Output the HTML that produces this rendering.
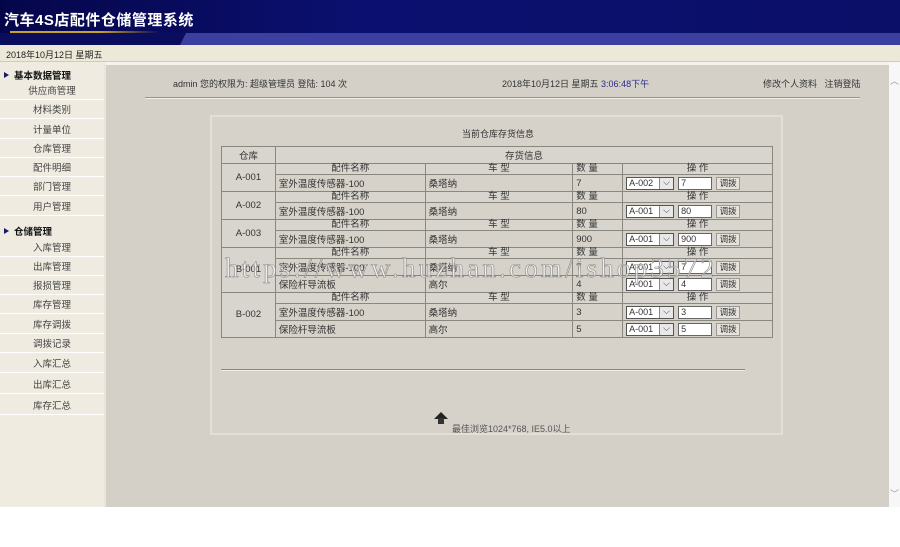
<!DOCTYPE html>
<html><head><meta charset="utf-8"><style>
*{margin:0;padding:0;box-sizing:border-box}
body{width:900px;height:547px;background:#fff;position:relative;overflow:hidden;font-family:"Liberation Sans","Noto Sans CJK SC",sans-serif;font-size:10px;color:#333}
.a{position:absolute;white-space:nowrap}
#hdr{left:0;top:0;width:900px;height:33px;background:linear-gradient(90deg,#05064a 0%,#0b1070 40%,#0b0f68 100%)}
#band{left:0;top:33px;width:900px;height:12px;background:#0a0d5e}
#band2{left:180px;top:33px;width:720px;height:12px;background:#3a3fa0;clip-path:polygon(6px 0,100% 0,100% 100%,0 100%)}
#title{left:4px;top:9px;color:#fff;font-size:15px;font-weight:bold;letter-spacing:.5px}
#gold{left:10px;top:31px;width:150px;height:2px;background:linear-gradient(90deg,#c9a227,#c9a227 60%,rgba(201,162,39,0))}
#datebar{left:0;top:45px;width:900px;height:17px;background:#ece9d8;border-bottom:1px solid #cfcbbd}
#side{left:0;top:62px;width:104px;height:445px;background:#efebe0}
.si{position:absolute;left:0;width:104px;height:19px;border-bottom:1px solid #fff;text-align:center;line-height:21px;font-size:9.5px;color:#444}
.sh{position:absolute;left:0;width:104px;text-align:left;padding-left:14px;font-weight:bold;font-size:9.5px;color:#111}
.sh:before{content:"";position:absolute;left:4px;top:4px;border-left:5px solid #1a1a6a;border-top:3.5px solid transparent;border-bottom:3.5px solid transparent}
#main{left:104px;top:62px;width:785px;height:445px;background:#d4d0c8;border-top:3px solid #f4f2ec;border-left:2px solid #e8e5dc}
#scroll{left:889px;top:62px;width:11px;height:445px;background:#f7f7f7}
#panel{left:210px;top:115px;width:573px;height:320px;background:#d6d2ca;border:2px solid #e2dfd8}
table{position:absolute;left:221px;top:146px;width:552px;border-collapse:collapse;font-size:9.5px}
td{border:1px solid #8a877f;padding:0 3px;color:#333;white-space:nowrap}
td.l{background:#d6d2ca;text-align:center}
tr.h td{height:11px;line-height:10px;text-align:center;background:#d8d5ce}
tr.d td{height:17px;background:#d6d2ca}
.sel{display:inline-block;width:48px;height:13px;border:1px solid #555;background:#fff;font-size:9px;line-height:11px;padding-left:2px;position:relative;vertical-align:middle}
.sel:after{content:"⌵";position:absolute;right:0;top:0;width:13px;height:11px;background:#e8e8e8;border-left:1px solid #888;text-align:center;font-size:9px;line-height:8px}
.inp{display:inline-block;width:34px;height:13px;border:1px solid #666;background:#fff;font-size:9px;line-height:11px;padding-left:2px;margin-left:4px;vertical-align:middle}
.btn{display:inline-block;width:24px;height:13px;border:1px solid #999;background:#e6e3dc;font-size:8.5px;line-height:11px;text-align:center;margin-left:4px;vertical-align:middle}
#wm{left:225px;top:253px;font-family:"Liberation Serif",serif;font-size:27px;color:rgba(255,255,255,.6);-webkit-text-stroke:0.6px #888;letter-spacing:3.2px}
</style></head><body>
<div class="a" id="hdr"></div>
<div class="a" id="band"></div>
<div class="a" id="band2"></div>
<div class="a" id="title">汽车4S店配件仓储管理系统</div>
<div class="a" id="gold"></div>
<div class="a" id="datebar"><span style="position:absolute;left:6px;top:3px;font-size:9px;color:#222">2018年10月12日 星期五</span></div>
<div class="a" id="side">
<div class="sh" style="top:6px">基本数据管理</div>
<div class="si" style="top:19px">供应商管理</div>
<div class="si" style="top:38px">材料类别</div>
<div class="si" style="top:58px">计量单位</div>
<div class="si" style="top:77px">仓库管理</div>
<div class="si" style="top:96px">配件明细</div>
<div class="si" style="top:115px">部门管理</div>
<div class="si" style="top:135px">用户管理</div>
<div class="sh" style="top:162px">仓储管理</div>
<div class="si" style="top:176px">入库管理</div>
<div class="si" style="top:195px">出库管理</div>
<div class="si" style="top:214px">报损管理</div>
<div class="si" style="top:233px">库存管理</div>
<div class="si" style="top:253px">库存调拨</div>
<div class="si" style="top:272px">调拨记录</div>
<div class="si" style="top:292px">入库汇总</div>
<div class="si" style="top:313px">出库汇总</div>
<div class="si" style="top:334px">库存汇总</div>
</div>
<div class="a" id="main"></div>
<div class="a" id="scroll"><span style="position:absolute;left:1px;top:12px;color:#999;font-size:9px">︿</span><span style="position:absolute;left:1px;top:425px;color:#999;font-size:9px">﹀</span></div>
<div class="a" style="left:173px;top:77px;font-size:9px">admin 您的权限为: 超级管理员 登陆: 104 次</div>
<div class="a" style="left:502px;top:77px;font-size:9px">2018年10月12日 星期五 <span style="color:#2a2a8a">3:06:48下午</span></div>
<div class="a" style="left:763px;top:77px;font-size:9px">修改个人资料 &nbsp; 注销登陆</div>
<div class="a" style="left:145px;top:97px;width:715px;height:2px;border-top:1px solid #99958c;border-bottom:1px solid #f0eee8"></div>
<div class="a" id="panel"></div>
<div class="a" style="left:462px;top:127px;font-size:9px">当前仓库存货信息</div>
<table>
<colgroup><col style="width:54px"><col style="width:150px"><col style="width:148px"><col style="width:50px"><col style="width:150px"></colgroup>
<tr><td class="l" style="height:17px;background:#d8d5ce">仓库</td><td colspan="4" style="text-align:center;background:#d8d5ce">存货信息</td></tr>
<tr class="h"><td class="l" rowspan="2">A-001</td><td>配件名称</td><td>车 型</td><td style="text-align:left">数 量</td><td>操 作</td></tr>
<tr class="d"><td>室外温度传感器-100</td><td>桑塔纳</td><td>7</td><td><span class="sel">A-002</span><span class="inp">7</span><span class="btn">调拨</span></td></tr>
<tr class="h"><td class="l" rowspan="2">A-002</td><td>配件名称</td><td>车 型</td><td style="text-align:left">数 量</td><td>操 作</td></tr>
<tr class="d"><td>室外温度传感器-100</td><td>桑塔纳</td><td>80</td><td><span class="sel">A-001</span><span class="inp">80</span><span class="btn">调拨</span></td></tr>
<tr class="h"><td class="l" rowspan="2">A-003</td><td>配件名称</td><td>车 型</td><td style="text-align:left">数 量</td><td>操 作</td></tr>
<tr class="d"><td>室外温度传感器-100</td><td>桑塔纳</td><td>900</td><td><span class="sel">A-001</span><span class="inp">900</span><span class="btn">调拨</span></td></tr>
<tr class="h"><td class="l" rowspan="3">B-001</td><td>配件名称</td><td>车 型</td><td style="text-align:left">数 量</td><td>操 作</td></tr>
<tr class="d"><td>室外温度传感器-100</td><td>桑塔纳</td><td>7</td><td><span class="sel">A-001</span><span class="inp">7</span><span class="btn">调拨</span></td></tr>
<tr class="d"><td>保险杆导流板</td><td>高尔</td><td>4</td><td><span class="sel">A-001</span><span class="inp">4</span><span class="btn">调拨</span></td></tr>
<tr class="h"><td class="l" rowspan="3">B-002</td><td>配件名称</td><td>车 型</td><td style="text-align:left">数 量</td><td>操 作</td></tr>
<tr class="d"><td>室外温度传感器-100</td><td>桑塔纳</td><td>3</td><td><span class="sel">A-001</span><span class="inp">3</span><span class="btn">调拨</span></td></tr>
<tr class="d"><td>保险杆导流板</td><td>高尔</td><td>5</td><td><span class="sel">A-001</span><span class="inp">5</span><span class="btn">调拨</span></td></tr>
</table>
<div class="a" style="left:221px;top:369px;width:524px;height:2px;border-top:1px solid #8a877f;border-bottom:1px solid #eeece6"></div>
<div class="a" style="left:434px;top:412px;width:0;height:0;border-left:7px solid transparent;border-right:7px solid transparent;border-bottom:7px solid #222"></div>
<div class="a" style="left:438px;top:418px;width:6px;height:6px;background:#333"></div>
<div class="a" style="left:452px;top:422px;font-size:9px;color:#555">最佳浏览1024*768, IE5.0以上</div>
<div class="a" id="wm">https://www.huzhan.com/ishop3572</div>
</body></html>
